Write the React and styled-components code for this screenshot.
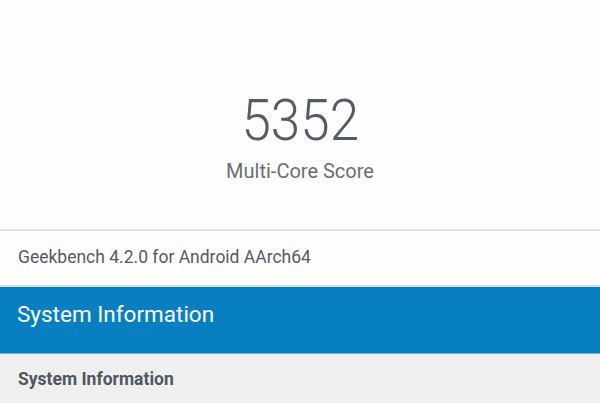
import React from 'react'
import styled, { createGlobalStyle } from 'styled-components'

const GlobalStyle = createGlobalStyle`
    body {
        margin: 0;
        font-family: Roboto, "Noto Sans", sans-serif;
        background: #efefef;
    }
`

const App = () => {
  return (
    <Page>
        <GlobalStyle />
        <ScoreCard>
            <Score>5352</Score>
            <ScoreLabel>Multi-Core Score</ScoreLabel>
        </ScoreCard>
        <VersionRow>Geekbench 4.2.0 for Android AArch64</VersionRow>
        <SectionHeader>System Information</SectionHeader>
        <SubHeader>System Information</SubHeader>
    </Page>
  )
}

export default App

const Page = styled.div`
    display: flex;
    flex-direction: column;
    width: 600px;
    height: 403px;
    overflow: hidden;
`
const ScoreCard = styled.div`
    display: flex;
    flex-direction: column;
    align-items: center;
    flex-shrink: 0;
    height: 137px;
    padding-top: 92px;
    background: #fdfdfd;
    border-bottom: 2px solid #e2e2e2;
`
const Score = styled.div`
    color: #535b65;
    font-size: 57px;
    font-weight: 300;
    line-height: 57px;
    transform: scaleX(0.93);
`
const ScoreLabel = styled.div`
    margin-top: 12px;
    color: #6a6e74;
    font-size: 20px;
    line-height: 20px;
`
const VersionRow = styled.div`
    flex-shrink: 0;
    height: 36px;
    padding: 18px 0 0 18px;
    background: #fdfdfd;
    color: #555b63;
    font-size: 17.5px;
    line-height: 17.5px;
    white-space: nowrap;
    border-bottom: 2px solid #dcdcdc;
`
const SectionHeader = styled.div`
    flex-shrink: 0;
    height: 50px;
    padding: 16px 0 0 17px;
    background: #077fc1;
    color: #ffffff;
    font-size: 22.5px;
    line-height: 23px;
    white-space: nowrap;
    border-bottom: 1px solid #6fb0dc;
`
const SubHeader = styled.div`
    flex: 1;
    padding: 17px 0 0 18px;
    background: #efefef;
    color: #4f5660;
    font-size: 17.5px;
    font-weight: 700;
    line-height: 17.5px;
    white-space: nowrap;
`
